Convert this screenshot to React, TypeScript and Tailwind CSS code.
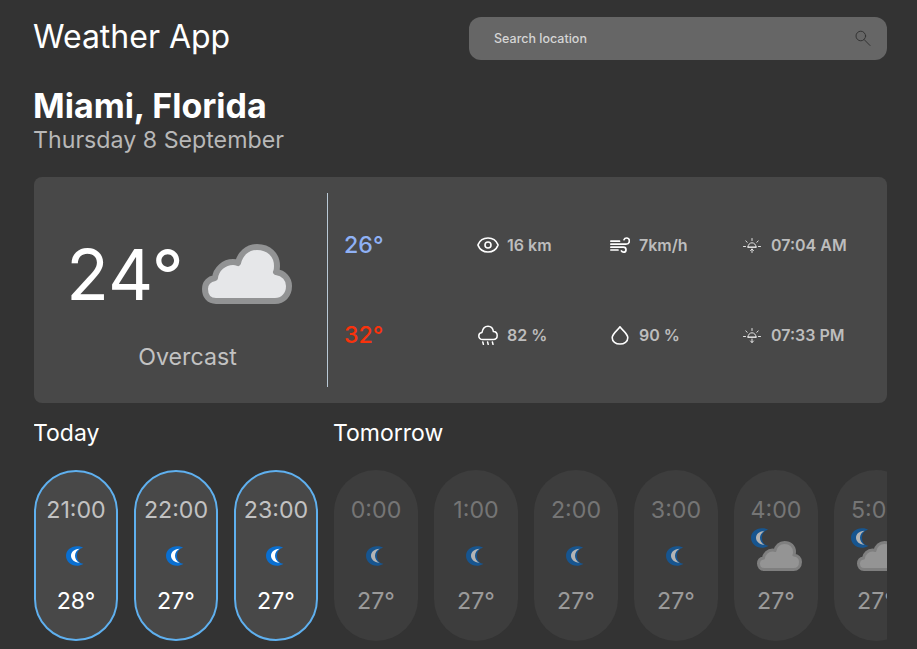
import type { ReactNode } from "react";
import { Eye } from "lucide-react";

const today = [
  { time: "21:00", temp: "28°" },
  { time: "22:00", temp: "27°" },
  { time: "23:00", temp: "27°" },
];

const tomorrow = [
  { time: "0:00", temp: "27°" },
  { time: "1:00", temp: "27°" },
  { time: "2:00", temp: "27°" },
  { time: "3:00", temp: "27°" },
  { time: "4:00", temp: "27°", cloudy: true },
  { time: "5:00", temp: "27°", cloudy: true },
];

function Cloud({ className, fill, stroke, width }: { className: string; fill: string; stroke: string; width: number }) {
  return (
    <svg viewBox="0 0 90 60" className={className}>
      <path
        d="M14 57C7 57 3 52 3 45C3 39 7 35 13 34C14 25 22 18 31 18C33 18 35 18.5 36 19C38 10 45 3 55 3C67 3 75 11 75 22C75 24 75 26 74 28C82 29 87 35 87 42C87 51 81 57 73 57Z"
        fill={fill}
        stroke={stroke}
        strokeWidth={width}
        strokeLinejoin="round"
      />
    </svg>
  );
}

function Moon({ className, fill, stroke }: { className: string; fill: string; stroke: string }) {
  return (
    <svg viewBox="0 0 18 19.5" className={className}>
      <path d="M12 0C5 -0.5 0 4 0 9.5C0 15 5 20 12 19.5C14 19.4 16 18.6 17.5 17.6C13 17 11 13.5 11 9.5C11 5.5 13 2.5 17 1.5C15.5 0.5 14 0 12 0Z" fill={stroke} />
      <path d="M13.5 2.6C8 3 5 6 5 9.6C5 13 8 16.2 13.5 16.8C10.5 15 9 12.5 9 9.6C9 6.8 10.5 4.3 13.5 2.6Z" fill={fill} />
    </svg>
  );
}

function SearchIcon() {
  return (
    <svg viewBox="0 0 16 16" className="-mt-px h-4 w-4" fill="none" stroke="#333333" strokeWidth="1" strokeLinecap="round">
      <circle cx="5.8" cy="6" r="4.8" />
      <path d="M9.2 9.6L15 15.5" />
    </svg>
  );
}

function RainIcon() {
  return (
    <svg viewBox="0 0 20 20" className="h-5 w-5" fill="none" stroke="white" strokeWidth="1.5" strokeLinecap="round" strokeLinejoin="round">
      <path d="M4.6 14.6C2.3 14.6 0.8 13 0.8 11C0.8 9 2.2 7.6 4 7.4C4.6 3.6 7 1.2 10 1.2C13 1.2 15 3.4 15.4 6.6C17.6 6.7 19.2 8.4 19.2 10.6C19.2 12.9 17.5 14.6 15.2 14.6Z" />
      <path d="M4.8 17L5.4 19.4M9.6 17L10.2 19.4M14.4 17L15 19.4" />
    </svg>
  );
}

function WindIcon() {
  return (
    <svg viewBox="0 0 20 20" className="h-5 w-5" fill="none" stroke="white" strokeWidth="1.7" strokeLinecap="round" strokeLinejoin="round">
      <path d="M0.8 6.2H9.5M0.8 9.2H16C18 9.2 19.4 7.8 19.4 5.8C19.4 4.2 18.2 3 16.6 3C15.4 3 14.4 3.7 14 4.7" />
      <path d="M0.8 12.2H13.4C14.9 12.2 16 13.2 16 14.7C16 16.2 14.9 17.2 13.6 17.2C12.6 17.2 11.8 16.7 11.4 15.9" />
      <path d="M0.8 15H8" />
    </svg>
  );
}

function DropIcon() {
  return (
    <svg viewBox="0 0 20 20" className="h-5 w-5" fill="none" stroke="white" strokeWidth="1.6" strokeLinejoin="round">
      <path d="M10 1.8C12.2 5.2 17.8 8.4 17.8 12.8C17.8 16.6 14.3 19 10 19C5.7 19 2.2 16.6 2.2 12.8C2.2 8.4 7.8 5.2 10 1.8Z" />
    </svg>
  );
}

function SunIcon({ down }: { down?: boolean }) {
  return (
    <svg viewBox="0 0 20 20" className="h-5 w-5" fill="none" stroke="#e4e4e4" strokeWidth="1" strokeLinecap="round" strokeLinejoin="round">
      <path d="M6 12C6 9.6 7.8 7.8 10 7.8C12.2 7.8 14 9.6 14 12Z" />
      <path d="M5.5 12H14.5M10 3.5V5.5M3.8 6L5.2 7.3M16.2 6L14.8 7.3M1.5 11.5H3.5M16.5 11.5H18.5" />
      {down ? <path d="M10 14V17.5M8.5 16L10 17.5L11.5 16" /> : <path d="M10 17.5V14M8.5 15.5L10 14L11.5 15.5" />}
    </svg>
  );
}

function Stat({ icon, text, width }: { icon: ReactNode; text: string; width: string }) {
  return (
    <div className={`flex items-center gap-[9px] ${width}`}>
      <span className="flex w-5 shrink-0 justify-center">{icon}</span>
      <span className="text-base font-semibold text-[#bdbdbd]">{text}</span>
    </div>
  );
}

function HourPill({ time, temp, cloudy, active }: { time: string; temp: string; cloudy?: boolean; active?: boolean }) {
  return (
    <div
      className={
        active
          ? "flex h-[171px] w-[84px] shrink-0 flex-col items-center rounded-[42px] border-2 border-[#5fb0ef] bg-[#484848]"
          : "flex h-[171px] w-[84px] shrink-0 flex-col items-center rounded-[42px] border-2 border-transparent bg-[#3d3d3d]"
      }
    >
      <div className={active ? "mt-[23px] h-[30px] text-[23.2px] leading-[30px] text-[#c2c2c2]" : "mt-[23px] h-[30px] text-[23.2px] leading-[30px] text-[#757575]"}>
        {time}
      </div>
      <div className="relative h-[61px] w-full">
        {cloudy ? (
          <>
            <Moon className="absolute left-[15px] top-[3px] h-[20px] w-[18px]" fill="#b4b4b4" stroke="#17558f" />
            <Cloud className="absolute left-[21px] top-[16px] h-[30px] w-[45px]" fill="#949494" stroke="#7f7f7f" width={6} />
          </>
        ) : (
          <Moon
            className="absolute left-[30px] top-[21px] h-[20px] w-[18px]"
            fill={active ? "#ffffff" : "#b4b4b4"}
            stroke={active ? "#0a6fd0" : "#17558f"}
          />
        )}
      </div>
      <div className={active ? "h-[30px] text-[23.2px] leading-[30px] text-white" : "h-[30px] text-[23.2px] leading-[30px] text-[#9a9a9a]"}>
        {temp}
      </div>
    </div>
  );
}

export default function App() {
  return (
    <main className="h-[649px] w-[917px] overflow-hidden bg-[#333333] pl-[34px] pr-[30px] pt-[17px] font-['Inter',sans-serif] text-white">
      <header className="flex items-start justify-between">
        <h1 className="-ml-px text-[32px] leading-[40px]">Weather App</h1>
        <div className="flex h-[43px] w-[418px] items-center justify-between rounded-xl bg-[#666666] pl-[25px] pr-[16px]">
          <span className="mt-px text-[12.5px] font-medium text-[#d5d5d5]">Search location</span>
          <SearchIcon />
        </div>
      </header>

      <section className="mt-[25px] -ml-px">
        <h2 className="text-[34px] font-bold leading-[41px]">Miami, Florida</h2>
        <p className="text-[23.2px] leading-[28px] text-[#b8b8b8]">Thursday 8 September</p>
      </section>

      <section className="mt-[23px] flex h-[226px] items-center rounded-lg bg-[#484848]">
        <div className="flex h-[194px] w-[294px] shrink-0 flex-col items-center border-r border-[#b9c9d6]">
          <div className="mt-[47px] flex h-[70px] items-center gap-[18px] pr-[3px]">
            <span className="text-[70px] leading-none">24°</span>
            <Cloud className="-mt-[3px] h-[60px] w-[90px]" fill="#e6e7e9" stroke="#929394" width={6} />
          </div>
          <p className="mt-[32px] pl-[14px] text-[23.2px] leading-[30px] text-[#c2c2c2]">Overcast</p>
        </div>
        <div className="flex h-[194px] flex-1 flex-col justify-center gap-[60px] pl-[16px]">
          <div className="flex h-[30px] items-center">
            <span className="w-[134px] text-[23.2px] font-medium text-[#8fb1f5]">26°</span>
            <Stat width="w-[132px]" text="16 km" icon={<Eye size={24} strokeWidth={1.6} className="shrink-0" />} />
            <Stat width="w-[132px]" text="7km/h" icon={<WindIcon />} />
            <Stat width="" text="07:04 AM" icon={<SunIcon />} />
          </div>
          <div className="flex h-[30px] items-center">
            <span className="w-[134px] text-[23.2px] font-medium text-[#f9320c]">32°</span>
            <Stat width="w-[132px]" text="82 %" icon={<RainIcon />} />
            <Stat width="w-[132px]" text="90 %" icon={<DropIcon />} />
            <Stat width="" text="07:33 PM" icon={<SunIcon down />} />
          </div>
        </div>
      </section>

      <section className="mt-[15px] flex gap-4 overflow-hidden">
        <div className="shrink-0">
          <h3 className="-ml-px text-[23px] leading-[30px]">Today</h3>
          <div className="mt-[22px] flex gap-4">
            {today.map(hour => (
              <HourPill key={hour.time} {...hour} active />
            ))}
          </div>
        </div>
        <div className="shrink-0">
          <h3 className="-ml-px text-[23px] leading-[30px]">Tomorrow</h3>
          <div className="mt-[22px] flex gap-4">
            {tomorrow.map(hour => (
              <HourPill key={hour.time} {...hour} />
            ))}
          </div>
        </div>
      </section>
    </main>
  );
}
